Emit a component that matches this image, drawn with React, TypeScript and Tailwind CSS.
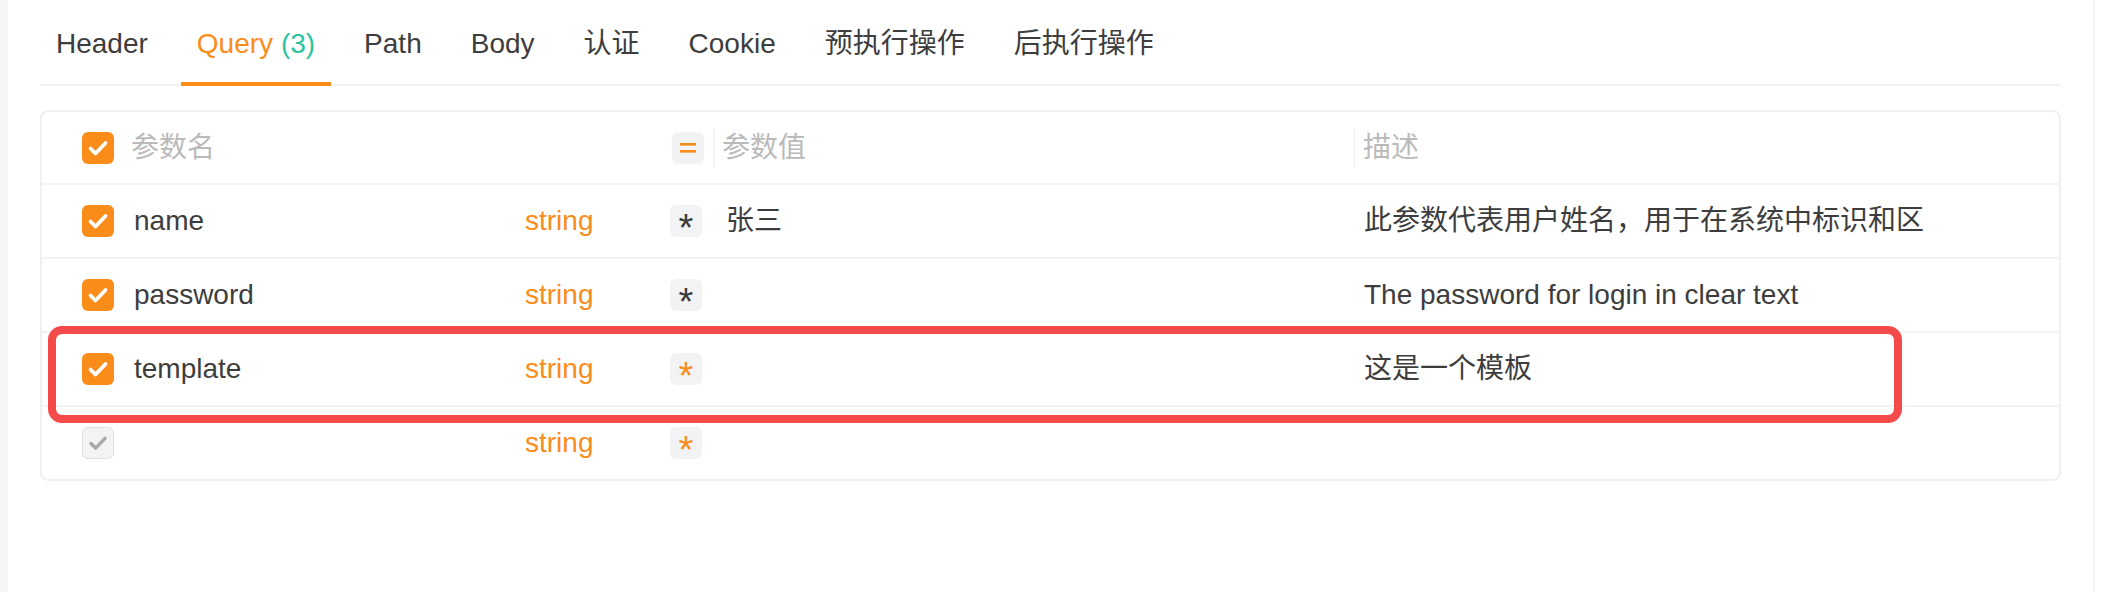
import React from 'react'

const tabs = ['Header', 'Query', 'Path', 'Body', '认证', 'Cookie', '预执行操作', '后执行操作']

type Param = {
  name: string
  type: string
  value: string
  desc: string
  checked: boolean
  required: boolean
}

const params: Param[] = [
  { name: 'name', type: 'string', value: '张三', desc: '此参数代表用户姓名，用于在系统中标识和区', checked: true, required: false },
  { name: 'password', type: 'string', value: '', desc: 'The password for login in clear text', checked: true, required: false },
  { name: 'template', type: 'string', value: '', desc: '这是一个模板', checked: true, required: true },
  { name: '', type: 'string', value: '', desc: '', checked: false, required: true },
]

function Checkbox({ checked }: { checked: boolean }) {
  if (!checked) {
    return (
      <div className="flex h-[32px] w-[32px] shrink-0 items-center justify-center rounded-[6px] border-[1.5px] border-[#e0e0e0] bg-[#f3f3f3]">
        <svg width="32" height="32" viewBox="0 0 32 32" fill="none">
          <path d="M8.5 16.5L13.5 21.5L23.5 11" stroke="#a9a9a9" strokeWidth="3.6" strokeLinecap="round" strokeLinejoin="round" />
        </svg>
      </div>
    )
  }
  return (
    <div className="flex h-[32px] w-[32px] shrink-0 items-center justify-center rounded-[6px] bg-[#fa8c1a]">
      <svg width="32" height="32" viewBox="0 0 32 32" fill="none">
        <path d="M8.5 16.5L13.5 21.5L23.5 11" stroke="#ffffff" strokeWidth="3.8" strokeLinecap="round" strokeLinejoin="round" />
      </svg>
    </div>
  )
}

function Tag({ children, orange }: { children: React.ReactNode; orange?: boolean }) {
  return (
    <div
      className={`flex h-[32px] w-[32px] shrink-0 items-center justify-center rounded-[6px] bg-[#f2f3f5] text-[38px] leading-[32px] ${
        orange ? 'text-[#fa8c1a]' : 'text-[#3a3a3a]'
      }`}
    >
      <span className="block h-[32px] translate-y-[7px]">{children}</span>
    </div>
  )
}

export default function App() {
  return (
    <div className="relative flex h-[592px] w-full bg-white font-['Liberation_Sans','Noto_Sans_CJK_SC',sans-serif] text-[28px] text-[#3d3d3d]">
      <div className="w-[8px] shrink-0 bg-[#f5f6f8]" />

      <div className="flex-1 px-[32px]">
        {/* tabs */}
        <div className="flex h-[86px] gap-[17px] border-b-2 border-[#f2f2f2]">
          {tabs.map((t) => {
            const active = t === 'Query'
            return (
              <div key={t} className="relative flex h-[84px] items-center px-[16px] pt-[3px]">
                {active ? (
                  <span className="text-[#fa8c1a]">
                    Query <span className="text-[#2cc4a0]">(3)</span>
                  </span>
                ) : (
                  <span>{t}</span>
                )}
                {active && <div className="absolute bottom-[-2px] left-0 right-0 h-[4px] bg-[#fa8c1a]" />}
              </div>
            )
          })}
        </div>

        {/* params table */}
        <div className="mt-[24px] rounded-[8px] border-2 border-[#f0f0f0]">
          <div className="flex h-[71px] items-center text-[#bababa]">
            <div className="flex w-[483px] items-center pl-[40px]">
              <Checkbox checked />
              <span className="ml-[17px]">参数名</span>
            </div>
            <div className="w-[145px]" />
            <div className="flex w-[684px] items-center">
              <div className="ml-[2px] flex h-[32px] w-[32px] items-center justify-center rounded-[6px] bg-[#f2f3f5]">
                <svg width="16" height="12" viewBox="0 0 16 12">
                  <rect x="0" y="1" width="16" height="2.6" fill="#fa8c1a" />
                  <rect x="0" y="8" width="16" height="2.6" fill="#fa8c1a" />
                </svg>
              </div>
              <div className="ml-[9px] h-[40px] w-[2px] bg-[#f2f2f2]" />
              <span className="ml-[7px]">参数值</span>
            </div>
            <div className="flex flex-1 items-center">
              <div className="h-[40px] w-[1px] bg-[#eeeeee]" />
              <span className="ml-[8px]">描述</span>
            </div>
          </div>

          {params.map((p, i) => (
            <div key={i} className="flex h-[74px] items-center border-t-2 border-[#f2f2f2]">
              <div className="flex w-[483px] items-center pl-[40px]">
                <Checkbox checked={p.checked} />
                <span className="ml-[20px]">{p.name}</span>
              </div>
              <div className="w-[145px] text-[#fa8c1a]">{p.type}</div>
              <div className="flex w-[684px] items-center">
                <Tag orange={p.required}>*</Tag>
                <span className="ml-[24px]">{p.value}</span>
              </div>
              <div className="flex-1 pl-[10px]">{p.desc}</div>
            </div>
          ))}
        </div>
      </div>

      <div className="w-[2px] shrink-0 bg-[#f2f2f2]" />
      <div className="w-[29px] shrink-0" />

      {/* highlight */}
      <div className="pointer-events-none absolute left-[48px] top-[326px] h-[97px] w-[1854px] rounded-[14px] border-[8px] border-[#f44a4a]" />
    </div>
  )
}
